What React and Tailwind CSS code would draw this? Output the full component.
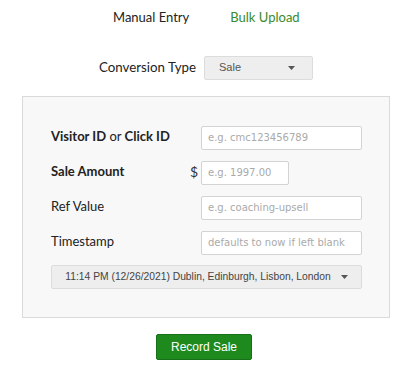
import React from "react";

const Caret = () => (
  <svg width="7" height="4" viewBox="0 0 7 4" className="fill-[#555]">
    <path d="M0 0h7L3.5 4z" />
  </svg>
);

const Field = ({ label, placeholder, prefix, narrow }) => (
  <div className="flex items-center h-6">
    <div className="flex-1 flex items-center justify-between text-[13px] text-[#222]">
      <span>{label}</span>
      {prefix && <span className="mr-[3px] text-[14px] text-[#333]">{prefix}</span>}
    </div>
    <div className="w-[161px]">
      <input
        placeholder={placeholder}
        className={`h-6 ${narrow ? "w-[88px]" : "w-[161px]"} rounded-[2px] border border-[#d3d3d3] bg-white px-[6px] text-[10px] font-['DejaVu_Sans',sans-serif] placeholder:text-[#aaa] outline-none`}
      />
    </div>
  </div>
);

export default function App() {
  return (
    <div className="w-[408px] h-[374px] bg-white font-['Lato',sans-serif]">
      {/* tabs */}
      <div className="flex pl-[113px] pt-[8px] gap-[41px] text-[13px]">
        <span className="text-[#222]">Manual Entry</span>
        <span className="text-[#3a8a2c]">Bulk Upload</span>
      </div>

      {/* conversion type */}
      <div className="flex items-center pl-[99px] mt-[28px] h-6 gap-[8px]">
        <span className="text-[13.3px] text-[#222]">Conversion Type</span>
        <div className="flex items-center justify-between w-[109px] h-6 rounded-[2px] border border-[#dcdcdc] bg-[#eeeeee] pl-[14px] pr-[17px] text-[11px] text-[#555] font-['Liberation_Sans',sans-serif]">
          Sale
          <Caret />
        </div>
      </div>

      {/* form panel */}
      <div className="mx-[22px] mt-[16px] w-[368px] border border-[#dadada] bg-[#f8f8f8] pl-[28px] pr-[27px] pt-[28px] pb-[28px] flex flex-col gap-[11px]">
        <Field
          label={
            <>
              <b className="font-bold">Visitor ID</b> or <b className="font-bold">Click ID</b>
            </>
          }
          placeholder="e.g. cmc123456789"
        />
        <Field label={<b className="font-bold">Sale Amount</b>} placeholder="e.g. 1997.00" prefix="$" narrow />
        <Field label="Ref Value" placeholder="e.g. coaching-upsell" />
        <Field label="Timestamp" placeholder="defaults to now if left blank" />
        <div className="flex items-center justify-center gap-[10px] h-6 rounded-[2px] border border-[#dcdcdc] bg-[#eeeeee] text-[10.3px] text-[#444] font-['Liberation_Sans',sans-serif] whitespace-nowrap">
          <span>11:14 PM (12/26/2021) Dublin, Edinburgh, Lisbon, London</span>
          <Caret />
        </div>
      </div>

      {/* submit */}
      <div className="flex justify-center mt-[16px]">
        <button className="w-[96px] h-[26px] rounded-[2px] bg-[#1e8a1e] border border-[#187018] text-white text-[12px] font-['Liberation_Sans',sans-serif]">
          Record Sale
        </button>
      </div>
    </div>
  );
}
